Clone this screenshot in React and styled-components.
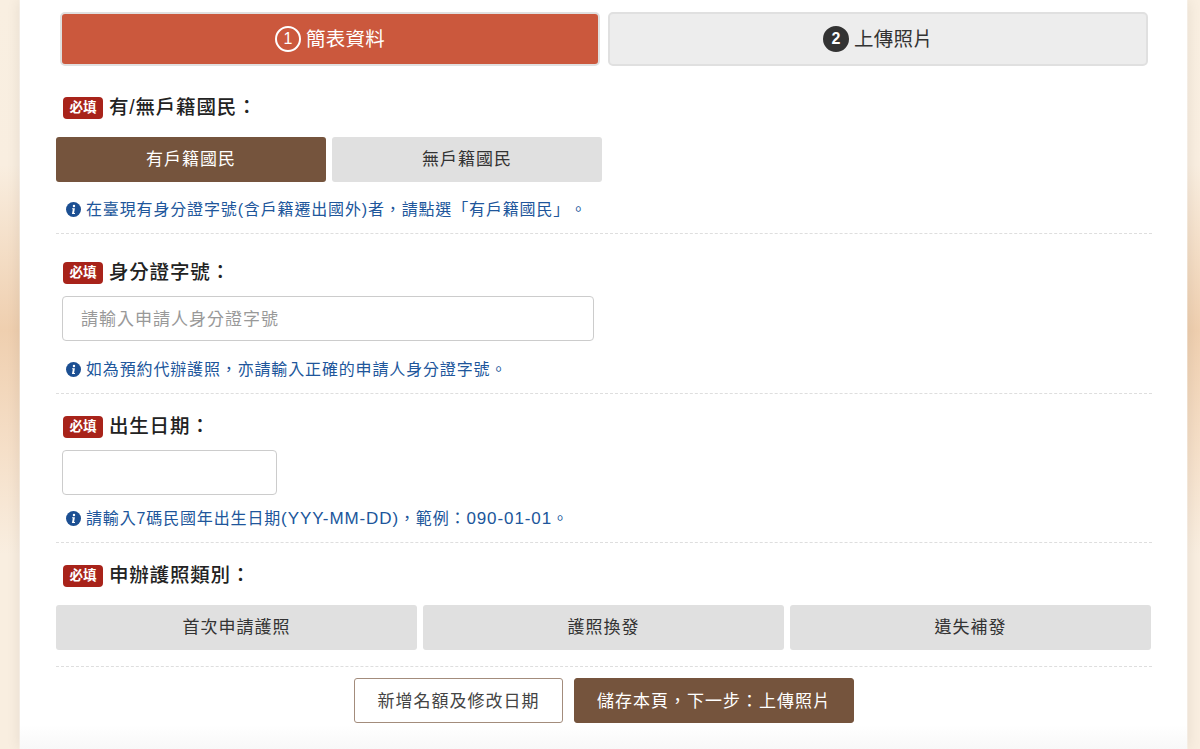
import React from "react";
import styled, { createGlobalStyle } from "styled-components";

const FONT = `"Liberation Sans", "Noto Sans CJK TC", sans-serif`;

const Global = createGlobalStyle`
  html, body { margin: 0; padding: 0; }
  body {
    height: 749px;
    overflow: hidden;
    background: linear-gradient(180deg, #f9efe1 0%, #f9eee0 22%, #efcfaf 44%, #f5dfc8 60%, #f9eee0 74%, #f9eee0 100%);
    font-family: ${FONT};
    color: #333;
    text-spacing-trim: space-all;
  }
  * { box-sizing: border-box; }
`;

const Panel = styled.main`
  width: 1167px;
  height: 749px;
  margin: 0 0 0 20px;
  padding: 12px 0 0 36px;
  background: linear-gradient(180deg, #fff 0, #fff 725px, #f8f8f8 749px);
  box-shadow: 0 0 0 1px rgba(255, 255, 255, 0.3), 0 0 14px rgba(0, 0, 0, 0.09);
`;

const Steps = styled.div`
  display: flex;
  gap: 8px;
  margin: 0 0 0 4px;
  width: 1088px;
`;

const Step = styled.div`
  flex: 1;
  height: 54px;
  display: flex;
  align-items: center;
  justify-content: center;
  gap: 5px;
  border: 2px solid #e0e0e0;
  border-radius: 5px;
  background: ${(p) => (p.$active ? "#cb583d" : "#ededed")};
  color: ${(p) => (p.$active ? "#fff" : "#333")};
  font-size: 19.5px;
  line-height: 24px;
  letter-spacing: 0.3px;
`;

const StepNum = styled.span`
  width: 26px;
  height: 26px;
  border-radius: 50%;
  display: flex;
  align-items: center;
  justify-content: center;
  font-size: 16px;
  letter-spacing: 0;
  font-weight: ${(p) => (p.$active ? 400 : 700)};
  border: 2px solid ${(p) => (p.$active ? "#fff" : "#333")};
  background: ${(p) => (p.$active ? "transparent" : "#333")};
  color: #fff;
`;

const Field = styled.section`
  width: 1096px;
  padding-top: ${(p) => p.$top}px;
  padding-bottom: ${(p) => p.$bottom}px;
  border-bottom: 1px dashed #dedede;
`;

const Label = styled.div`
  display: flex;
  align-items: center;
  gap: 6px;
  height: 24px;
  margin-left: 7px;
  font-size: 19.5px;
  font-weight: 500;
  line-height: 24px;
  letter-spacing: 0.8px;
  color: #222;
`;

const Badge = styled.span`
  width: 40px;
  height: 22px;
  border-radius: 4px;
  background: #a8231a;
  color: #fff;
  display: flex;
  align-items: center;
  justify-content: center;
  font-size: 13.5px;
  line-height: 22px;
  font-weight: 700;
  letter-spacing: 0;
`;

const LabelText = styled.span`
  position: relative;
  top: -1px;
`;

const Choices = styled.div`
  display: grid;
  grid-template-columns: repeat(${(p) => p.$cols}, 1fr);
  gap: 6px;
  width: ${(p) => p.$width}px;
  margin-top: ${(p) => p.$top}px;
`;

const Choice = styled.div`
  height: 45px;
  border-radius: 3px;
  display: flex;
  align-items: center;
  justify-content: center;
  background: ${(p) => (p.$active ? "#75543d" : "#e0e0e0")};
  color: ${(p) => (p.$active ? "#fff" : "#333")};
  font-size: 17px;
  line-height: 22px;
  letter-spacing: 1px;
`;

const TextInput = styled.input`
  display: block;
  width: ${(p) => p.$width}px;
  height: 45px;
  margin: ${(p) => p.$top}px 0 0 6px;
  padding: 2px 18px 0;
  border: 1px solid #ccc;
  border-radius: 4px;
  background: #fff;
  font: 17px ${FONT};
  letter-spacing: 1px;
  color: #333;
  &::placeholder { color: #999; opacity: 1; }
`;

const Hint = styled.p`
  display: flex;
  align-items: center;
  gap: 5px;
  height: 20px;
  margin: ${(p) => p.$top}px 0 0 10px;
  font-size: 16px;
  line-height: 20px;
  letter-spacing: 0.85px;
  color: #20569b;
  white-space: nowrap;
`;

const HintText = styled.span`
  position: relative;
  top: 1px;
`;

const Latin = styled.span`
  font-size: 17px;
  letter-spacing: 0.9px;
`;

const Actions = styled.div`
  display: flex;
  justify-content: center;
  gap: 11px;
  width: 1096px;
  margin-top: 11px;
`;

const ActionButton = styled.button`
  width: ${(p) => p.$width}px;
  height: 45px;
  padding: 0 0 2px;
  border-radius: 3px;
  border: 1px solid ${(p) => (p.$primary ? "#75543d" : "#a38c7c")};
  background: ${(p) => (p.$primary ? "#75543d" : "#fff")};
  color: ${(p) => (p.$primary ? "#fff" : "#444")};
  font: 17px ${FONT};
  letter-spacing: 1px;
`;

const InfoIcon = () => (
  <svg width="15" height="15" viewBox="0 0 16 16" aria-hidden="true">
    <circle cx="8" cy="8" r="8" fill="#1c4f92" />
    <circle cx="8.5" cy="4.2" r="1.3" fill="#fff" />
    <path d="M6.6 6.7h2.9l-.9 5h1v1H6.3l1-5h-.9z" fill="#fff" />
  </svg>
);

const Req = ({ children }) => (
  <Label>
    <Badge>必填</Badge>
    <LabelText>{children}</LabelText>
  </Label>
);

const Info = ({ top, children }) => (
  <Hint $top={top}>
    <InfoIcon />
    <HintText>{children}</HintText>
  </Hint>
);

export default function App() {
  return (
    <>
      <Global />
      <Panel>
        <Steps>
          <Step $active>
            <StepNum $active>1</StepNum>
            簡表資料
          </Step>
          <Step>
            <StepNum>2</StepNum>
            上傳照片
          </Step>
        </Steps>

        <Field $top={30} $bottom={14}>
          <Req>有/無戶籍國民：</Req>
          <Choices $cols={2} $width={546} $top={17}>
            <Choice $active>有戶籍國民</Choice>
            <Choice>無戶籍國民</Choice>
          </Choices>
          <Info top={17}>在臺現有身分證字號(含戶籍遷出國外)者，請點選「有戶籍國民」。</Info>
        </Field>

        <Field $top={27} $bottom={14}>
          <Req>身分證字號：</Req>
          <TextInput $width={532} $top={11} placeholder="請輸入申請人身分證字號" />
          <Info top={18}>如為預約代辦護照，亦請輸入正確的申請人身分證字號。</Info>
        </Field>

        <Field $top={21} $bottom={14}>
          <Req>出生日期：</Req>
          <TextInput $width={215} $top={11} />
          <Info top={13}>
            請輸入7碼民國年出生日期<Latin>(YYY-MM-DD)</Latin>，範例：<Latin>090-01-01</Latin>。
          </Info>
        </Field>

        <Field $top={21} $bottom={16}>
          <Req>申辦護照類別：</Req>
          <Choices $cols={3} $width={1095} $top={17}>
            <Choice>首次申請護照</Choice>
            <Choice>護照換發</Choice>
            <Choice>遺失補發</Choice>
          </Choices>
        </Field>

        <Actions>
          <ActionButton $width={209}>新增名額及修改日期</ActionButton>
          <ActionButton $primary $width={280}>儲存本頁，下一步：上傳照片</ActionButton>
        </Actions>
      </Panel>
    </>
  );
}
